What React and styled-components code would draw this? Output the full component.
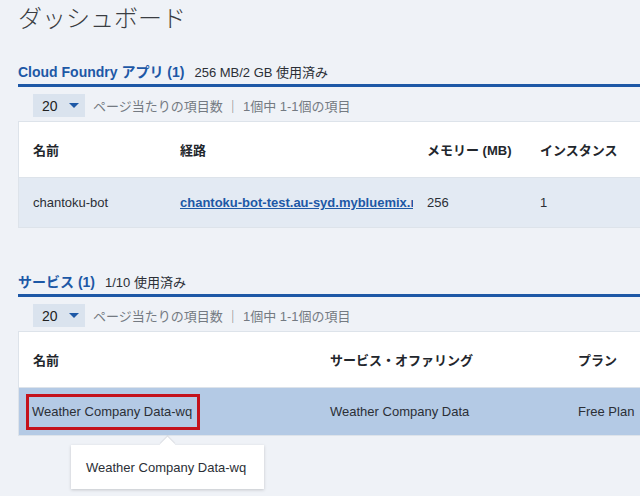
import React from "react";
import styled, { createGlobalStyle } from "styled-components";

const FONT = `"Liberation Sans", Arial, "Noto Sans CJK JP", sans-serif`;

const Global = createGlobalStyle`
  html, body { margin: 0; padding: 0; overflow: hidden; }
  body { background: #eff2f7; font-family: ${FONT}; color: #2b2f36; }
`;

const Page = styled.div`
  width: 640px;
  height: 496px;
  overflow: hidden;
  padding-left: 18px;
  box-sizing: border-box;
`;

const Title = styled.h1`
  margin: 0;
  font-family: "Noto Sans CJK JP", sans-serif;
  font-weight: 300;
  font-size: 24px;
  line-height: 34px;
  color: #3a3d42;
  height: 62px;
`;

const Section = styled.section`
  margin-top: ${(p) => p.$top || 0}px;
`;

const Heading = styled.div`
  display: flex;
  align-items: baseline;
  gap: 10px;
  height: 20px;
  line-height: 20px;
  padding-bottom: 2px;
  border-bottom: 3px solid #1d58a6;
  margin-right: -40px;
`;

const HeadTitle = styled.span`
  font-size: 14px;
  font-weight: bold;
  color: #1d58a6;
`;

const HeadMeta = styled.span`
  font-size: 13px;
  color: #2b2f36;
`;

const Toolbar = styled.div`
  display: flex;
  align-items: center;
  gap: 8px;
  margin-top: 7px;
  padding-left: 15px;
  height: 23px;
`;

const Select = styled.div`
  width: 52px;
  height: 23px;
  box-sizing: border-box;
  background: #dae3ee;
  display: flex;
  align-items: center;
  padding-left: 9px;
  gap: 11px;
  font-size: 14px;
  color: #222;
`;

const Caret = styled.svg`
  width: 10px;
  height: 5px;
  display: block;
`;

const PagerText = styled.span`
  font-size: 13px;
  color: #747a82;
`;

const Table = styled.div`
  margin-top: 4px;
  width: 700px;
  border: 1px solid #dde3ea;
  border-right: none;
  box-sizing: border-box;
`;

const Row = styled.div`
  display: grid;
  grid-template-columns: ${(p) => p.$cols};
  align-items: center;
  height: ${(p) => p.$h}px;
  background: ${(p) => p.$bg};
  border-top: ${(p) => (p.$divider ? "1px solid #dde3ea" : "none")};
  position: relative;
`;

const Cell = styled.div`
  padding-left: ${(p) => (p.$pl != null ? p.$pl : 14)}px;
  font-size: 13px;
  font-weight: ${(p) => (p.$head ? "bold" : "normal")};
  color: ${(p) => (p.$head ? "#22262c" : "#2b2f36")};
  white-space: nowrap;
  overflow: hidden;
`;

const Link = styled.a`
  color: #1d58a6;
  font-weight: bold;
  text-decoration: underline;
  font-size: 13px;
`;

const Highlight = styled.span`
  display: inline-block;
  border: 3px solid #c4121c;
  padding: 0 5px 0 3px;
  line-height: 30px;
`;

const Tooltip = styled.div`
  position: absolute;
  left: 52px;
  top: 57px;
  width: 193px;
  height: 44px;
  box-sizing: border-box;
  background: #fff;
  box-shadow: 0 1px 3px rgba(0, 0, 0, 0.18);
  padding-left: 15px;
  display: flex;
  align-items: center;
  font-size: 13px;
  color: #2b2f36;
  z-index: 2;
  &::before {
    content: "";
    position: absolute;
    left: 91px;
    top: -6px;
    width: 11px;
    height: 11px;
    background: #fff;
    transform: rotate(45deg);
    box-shadow: -1px -1px 1px rgba(0, 0, 0, 0.08);
  }
`;

const cols1 = "147px 247px 113px 1fr";
const cols2 = "297px 248px 1fr";

function Pager() {
  return (
    <Toolbar>
      <Select>
        20
        <Caret viewBox="0 0 10 5">
          <path d="M0 0 L10 0 L5 5 Z" fill="#1d58a6" />
        </Caret>
      </Select>
      <PagerText>ページ当たりの項目数 ｜ 1個中 1-1個の項目</PagerText>
    </Toolbar>
  );
}

export default function App() {
  return (
    <>
      <Global />
      <Page>
        <Title>ダッシュボード</Title>
        <Section>
          <Heading>
            <HeadTitle>Cloud Foundry アプリ (1)</HeadTitle>
            <HeadMeta>256 MB/2 GB 使用済み</HeadMeta>
          </Heading>
          <Pager />
          <Table>
            <Row $cols={cols1} $h={55} $bg="#fff">
              <Cell $head>名前</Cell>
              <Cell $head>経路</Cell>
              <Cell $head>メモリー (MB)</Cell>
              <Cell $head>インスタンス</Cell>
            </Row>
            <Row $cols={cols1} $h={49} $bg="#e3eaf3" $divider>
              <Cell>chantoku-bot</Cell>
              <Cell>
                <Link href="#">chantoku-bot-test.au-syd.mybluemix.net</Link>
              </Cell>
              <Cell>256</Cell>
              <Cell>1</Cell>
            </Row>
          </Table>
        </Section>
        <Section $top={44}>
          <Heading>
            <HeadTitle>サービス (1)</HeadTitle>
            <HeadMeta>1/10 使用済み</HeadMeta>
          </Heading>
          <Pager />
          <Table>
            <Row $cols={cols2} $h={55} $bg="#fff">
              <Cell $head>名前</Cell>
              <Cell $head>サービス・オファリング</Cell>
              <Cell $head>プラン</Cell>
            </Row>
            <Row $cols={cols2} $h={47} $bg="#b4cae5" $divider>
              <Cell $pl={7}>
                <Highlight>Weather Company Data-wq</Highlight>
              </Cell>
              <Cell>Weather Company Data</Cell>
              <Cell>Free Plan</Cell>
              <Tooltip>Weather Company Data-wq</Tooltip>
            </Row>
          </Table>
        </Section>
      </Page>
    </>
  );
}
